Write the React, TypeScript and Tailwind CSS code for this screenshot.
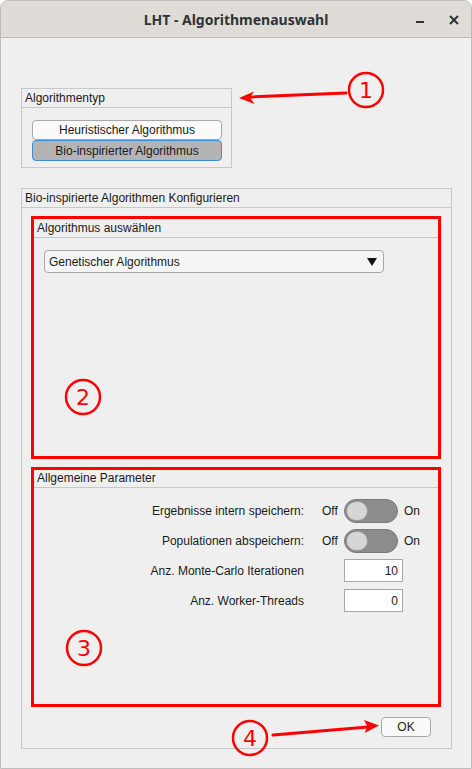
import React from 'react';

const font = { fontFamily: '"Liberation Sans", Arial, sans-serif' };

const Toggle: React.FC = () => (
  <div className="relative h-[24px] w-[54px] rounded-full bg-[#8c8c8c] border border-[#7a7a7a]">
    <div className="absolute left-[1px] top-[1px] h-[20px] w-[22px] rounded-full bg-[#d6d6d6] border border-[#9a9a9a]" />
  </div>
);

const ToggleRow: React.FC<{ label: string; className?: string }> = ({ label, className }) => (
  <div className={`flex items-center h-[24px] ${className ?? ''}`}>
    <span className="w-[270px] text-right">{label}</span>
    <span className="ml-[18px] w-[22px]">Off</span>
    <Toggle />
    <span className="ml-[6px]">On</span>
  </div>
);

const NumberRow: React.FC<{ label: string; value: string; className?: string }> = ({ label, value, className }) => (
  <div className={`flex items-center h-[23px] ${className ?? ''}`}>
    <span className="w-[270px] text-right">{label}</span>
    <div className="ml-[40px] h-[23px] w-[59px] bg-white border border-[#a8a8a8] flex items-center justify-end pr-[4px]">
      {value}
    </div>
  </div>
);

const Annotations: React.FC = () => (
  <svg className="absolute left-0 top-0 pointer-events-none" width="472" height="769" viewBox="0 0 472 769">
    <g fill="none" stroke="#ff0000" strokeWidth="3">
      <rect x="32.5" y="217.5" width="407" height="240" />
      <rect x="32.5" y="468.5" width="407" height="237" />
    </g>
    <g fill="none" stroke="#ff0000" strokeWidth="2.5">
      <circle cx="366" cy="90" r="17" />
      <circle cx="83" cy="397" r="17" />
      <circle cx="84" cy="648" r="17" />
      <circle cx="250" cy="738" r="17" />
    </g>
    <g stroke="#ff0000" strokeWidth="3" strokeLinecap="round">
      <line x1="346" y1="93" x2="250" y2="97" />
      <line x1="273" y1="735" x2="368" y2="727" />
    </g>
    <g fill="#ff0000">
      <path d="M239 98 L254 91.5 L250 97.5 L254.5 104 Z" />
      <path d="M379 725.5 L364 720 L367.5 726.5 L364.5 733 Z" />
    </g>
    <g fill="#ff0000" fontFamily='"DejaVu Sans", sans-serif' fontSize="22" textAnchor="middle">
      <text x="366" y="98">1</text>
      <text x="83" y="405">2</text>
      <text x="84" y="656">3</text>
      <text x="250" y="746">4</text>
    </g>
  </svg>
);

const App: React.FC = () => {
  return (
    <div className="relative w-[472px] h-[769px] bg-white">
      <div className="h-[769px] w-[472px] flex flex-col rounded-t-[8px] overflow-hidden border border-[#bdbdbd] bg-[#efefef]">
        {/* title bar */}
        <div className="h-[37px] shrink-0 bg-[#dfdcd8] border-b border-[#bfbcb8] flex items-center relative">
          <div
            className="w-full text-center text-[14px] font-bold text-[#2e3436]"
            style={{ fontFamily: '"Noto Sans", "DejaVu Sans", sans-serif' }}
          >
            LHT - Algorithmenauswahl
          </div>
          <svg className="absolute left-[413px] top-[13px]" width="14" height="14" viewBox="0 0 14 14">
            <rect x="2" y="7" width="8" height="2" fill="#2e3436" />
          </svg>
          <svg className="absolute left-[446px] top-[12px]" width="14" height="14" viewBox="0 0 14 14">
            <path d="M3 3 L11 11 M11 3 L3 11" stroke="#2e3436" strokeWidth="2" />
          </svg>
        </div>

        {/* body */}
        <div className="flex-1 text-[12px] text-[#1a1a1a] pl-[20px]" style={font}>
          {/* Algorithmentyp */}
          <div className="mt-[50px] w-[211px] h-[80px] border border-[#c8c8c8]">
            <div className="h-[19px] border-b border-[#c8c8c8] pl-[3px] leading-[18px]">Algorithmentyp</div>
            <div className="pl-[10px] pt-[12px] flex flex-col">
              <div className="w-[190px] h-[20px] rounded-[4px] border border-[#a8a8a8] bg-[#fafafa] flex items-center justify-center">
                Heuristischer Algorithmus
              </div>
              <div className="w-[190px] h-[21px] rounded-[4px] border border-[#3b8fd8] bg-[#b4b4b4] flex items-center justify-center">
                Bio-inspirierter Algorithmus
              </div>
            </div>
          </div>

          {/* Bio config */}
          <div className="mt-[20px] w-[431px] h-[561px] border border-[#c8c8c8]">
            <div className="h-[19px] border-b border-[#c8c8c8] pl-[3px] leading-[18px]">
              Bio-inspirierte Algorithmen Konfigurieren
            </div>
            <div className="pl-[11px] pt-[10px]">
              <div className="w-[407px] h-[240px] border border-[#c8c8c8]">
                <div className="h-[19px] border-b border-[#c8c8c8] pl-[3px] leading-[18px]">Algorithmus auswählen</div>
                <div className="pl-[10px] pt-[12px]">
                  <div className="w-[340px] h-[23px] rounded-[4px] border border-[#a8a8a8] bg-[#f5f5f5] flex items-center justify-between pl-[4px] pr-[6px]">
                    <span>Genetischer Algorithmus</span>
                    <svg width="10" height="8" viewBox="0 0 10 8">
                      <path d="M0 0 L10 0 L5 8 Z" fill="#111" />
                    </svg>
                  </div>
                </div>
              </div>

              <div className="mt-[11px] w-[407px] h-[237px] border border-[#c8c8c8]">
                <div className="h-[18px] border-b border-[#c8c8c8] pl-[3px] leading-[17px]">Allgemeine Parameter</div>
                <div className="pt-[11px]">
                  <ToggleRow label="Ergebnisse intern speichern:" />
                  <ToggleRow label="Populationen abspeichern:" className="mt-[6px]" />
                  <NumberRow label="Anz. Monte-Carlo Iterationen" value="10" className="mt-[6px]" />
                  <NumberRow label="Anz. Worker-Threads" value="0" className="mt-[7px]" />
                </div>
              </div>

              <div className="mt-[11px] flex justify-end pr-[20px]">
                <div className="w-[50px] h-[20px] rounded-[4px] border border-[#a8a8a8] bg-[#fafafa] flex items-center justify-center">
                  OK
                </div>
              </div>
            </div>
          </div>
        </div>
      </div>
      <Annotations />
    </div>
  );
};

export default App;
